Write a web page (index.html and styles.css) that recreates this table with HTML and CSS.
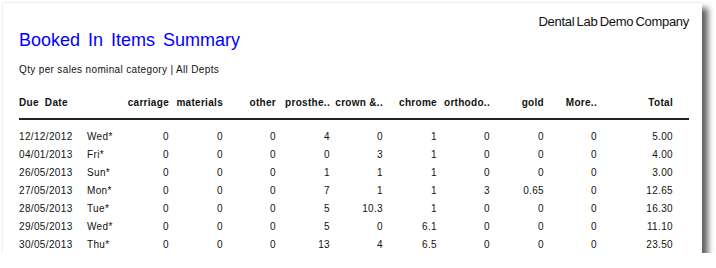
FILE: index.html
```html
<!DOCTYPE html>
<html>
<head>
<meta charset="utf-8">
<link rel="stylesheet" href="styles.css">
</head>
<body>
<div class="sheet">
  <div class="company">Dental Lab Demo Company</div>
  <h1 class="title">Booked In Items Summary</h1>
  <div class="subtitle">Qty per sales nominal category | All Depts</div>
  <div class="table">
    <div class="row head">
      <span class="c-date">Due Date</span><span class="c-day"></span>
      <span class="n">carriage</span><span class="n">materials</span><span class="n">other</span><span class="n">prosthe..</span><span class="n">crown &amp;..</span><span class="n">chrome</span><span class="n">orthodo..</span><span class="n">gold</span><span class="n">More..</span><span class="n">Total</span>
    </div>
    <div class="row"><span class="c-date">12/12/2012</span><span class="c-day">Wed*</span><span class="n">0</span><span class="n">0</span><span class="n">0</span><span class="n">4</span><span class="n">0</span><span class="n">1</span><span class="n">0</span><span class="n">0</span><span class="n">0</span><span class="n">5.00</span></div>
    <div class="row"><span class="c-date">04/01/2013</span><span class="c-day">Fri*</span><span class="n">0</span><span class="n">0</span><span class="n">0</span><span class="n">0</span><span class="n">3</span><span class="n">1</span><span class="n">0</span><span class="n">0</span><span class="n">0</span><span class="n">4.00</span></div>
    <div class="row"><span class="c-date">26/05/2013</span><span class="c-day">Sun*</span><span class="n">0</span><span class="n">0</span><span class="n">0</span><span class="n">1</span><span class="n">1</span><span class="n">1</span><span class="n">0</span><span class="n">0</span><span class="n">0</span><span class="n">3.00</span></div>
    <div class="row"><span class="c-date">27/05/2013</span><span class="c-day">Mon*</span><span class="n">0</span><span class="n">0</span><span class="n">0</span><span class="n">7</span><span class="n">1</span><span class="n">1</span><span class="n">3</span><span class="n">0.65</span><span class="n">0</span><span class="n">12.65</span></div>
    <div class="row"><span class="c-date">28/05/2013</span><span class="c-day">Tue*</span><span class="n">0</span><span class="n">0</span><span class="n">0</span><span class="n">5</span><span class="n">10.3</span><span class="n">1</span><span class="n">0</span><span class="n">0</span><span class="n">0</span><span class="n">16.30</span></div>
    <div class="row"><span class="c-date">29/05/2013</span><span class="c-day">Wed*</span><span class="n">0</span><span class="n">0</span><span class="n">0</span><span class="n">5</span><span class="n">0</span><span class="n">6.1</span><span class="n">0</span><span class="n">0</span><span class="n">0</span><span class="n">11.10</span></div>
    <div class="row"><span class="c-date">30/05/2013</span><span class="c-day">Thu*</span><span class="n">0</span><span class="n">0</span><span class="n">0</span><span class="n">13</span><span class="n">4</span><span class="n">6.5</span><span class="n">0</span><span class="n">0</span><span class="n">0</span><span class="n">23.50</span></div>
  </div>
</div>
</body>
</html>
```
FILE: styles.css
```css
html, body {
  margin: 0;
  padding: 0;
  background: #ffffff;
}
body {
  padding: 2px 0 0 2px;
  font-family: "Liberation Sans", Arial, sans-serif;
  color: #111;
}
.sheet {
  width: 700px;
  height: 251px;
  box-sizing: border-box;
  background: #fff;
  border-top: 1px solid #efefef;
  border-left: 1px solid #efefef;
  box-shadow: 6px 6px 6px rgba(0, 0, 0, 0.62);
  padding: 11px 13px 0 16px;
}
.company {
  text-align: right;
  font-size: 13px;
  line-height: 16px;
  color: #111;
  letter-spacing: -0.3px;
  word-spacing: -1px;
}
.title {
  margin: -1px 0 0 0;
  font-weight: normal;
  font-size: 18px;
  line-height: 22px;
  color: #0000ff;
  word-spacing: 3px;
}
.subtitle {
  margin-top: 13px;
  font-size: 10px;
  line-height: 12px;
  letter-spacing: 0.35px;
}
.table {
  margin-top: 21px;
}
.row {
  display: grid;
  grid-template-columns: 68px 28px 54px 54px 53px 54px 53px 54px 53px 54px 53px 76px 16px;
  height: 18px;
  align-items: center;
  font-size: 10px;
  letter-spacing: 0.35px;
}
.row.head {
  height: 21px;
  align-items: start;
  font-weight: bold;
  border-bottom: 2px solid #222;
  margin-bottom: 7px;
  letter-spacing: 0.3px;
}
.head .c-date {
  word-spacing: 3px;
}
.n {
  text-align: right;
}
```
